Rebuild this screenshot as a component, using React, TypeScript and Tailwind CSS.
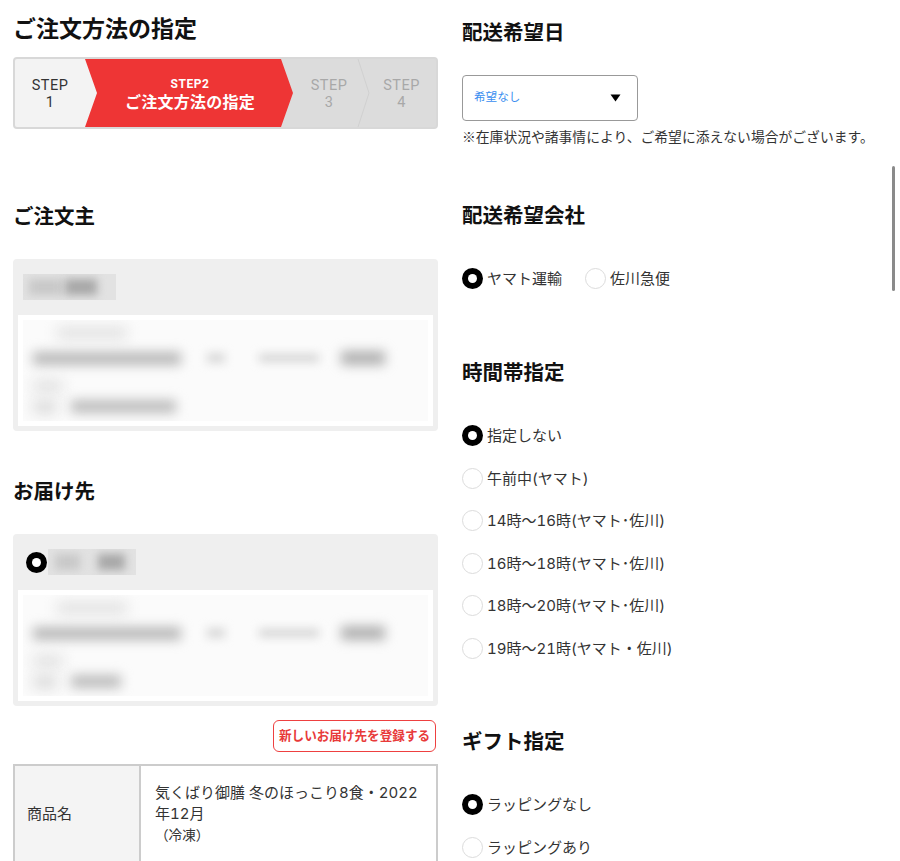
import React from "react";

const F = "font-['Inter','Noto_Sans_CJK_JP','Noto_Sans',sans-serif]";
const JP = "font-['Noto_Sans_CJK_JP',sans-serif]";

function Heading({ children, className = "" }: { children: React.ReactNode; className?: string }) {
  return <h2 className={`text-[20.5px] leading-[30px] font-bold text-[#111] ${className}`}>{children}</h2>;
}

function Radio({ on, label, className = "" }: { on?: boolean; label: string; className?: string }) {
  return (
    <div className={`flex items-center h-[21px] ${className}`}>
      {on ? (
        <span className="w-[21px] h-[21px] rounded-full bg-black flex items-center justify-center shrink-0">
          <span className="w-[9px] h-[9px] rounded-full bg-white" />
        </span>
      ) : (
        <span className="w-[21px] h-[21px] rounded-full border border-[#dcdcdc] bg-white shrink-0" />
      )}
      <span className="ml-[4px] text-[15px] leading-[21px] text-[#333] whitespace-nowrap tabular-nums">{label}</span>
    </div>
  );
}

function Step({ n, w }: { n: string; w: string }) {
  return (
    <div className={`${w} pt-[2px] flex flex-col items-center justify-center text-[14.5px] leading-[17px] tracking-[0.5px] text-[#a8a8a8] font-['Roboto',sans-serif]`}>
      <span>STEP</span>
      <span>{n}</span>
    </div>
  );
}

function BlurPanel({ radio, nameW, spotA, spotB, lastW }: { radio?: boolean; nameW: string; spotA: string; spotB: string; lastW: string }) {
  return (
    <div className="h-[172px] bg-[#efefef] rounded-[4px] px-[5px] pb-[5px] flex flex-col">
      <div className="h-[56px] flex items-center pl-[8px]">
        {radio && (
          <span className="w-[21px] h-[21px] rounded-full bg-black flex items-center justify-center shrink-0 mr-[1px]">
            <span className="w-[9px] h-[9px] rounded-full bg-white" />
          </span>
        )}
        <div className={`${nameW} h-[26px] bg-[#e2e2e2] flex items-center overflow-hidden ${radio ? "pl-[7px] gap-[18px]" : "pl-[6px] -ml-[3px] gap-[2px]"}`}>
          <div className={`h-[16px] ${spotA} bg-[#c8c8c8] blur-[4px]`} />
          <div className={`h-[16px] ${spotB} bg-[#a8a8a8] blur-[4px]`} />
        </div>
      </div>
      <div className="flex-1 bg-white p-[5px]">
        <div className="h-full bg-[#fbfbfb] px-[10px] pt-[8px] overflow-hidden">
          <div className="w-[70px] h-[10px] ml-[24px] bg-[#dcdcdc] blur-[7px]" />
          <div className="flex items-center mt-[12px] h-[16px]">
            <div className="w-[148px] h-[13px] bg-[#b8b8b8] blur-[6px]" />
            <div className="w-[18px] h-[10px] ml-[26px] bg-[#d8d8d8] blur-[5px]" />
            <div className="w-[60px] h-[8px] ml-[34px] bg-[#d4d4d4] blur-[5px]" />
            <div className="w-[44px] h-[14px] ml-[22px] bg-[#b0b0b0] blur-[6px]" />
          </div>
          <div className="w-[30px] h-[12px] mt-[14px] bg-[#e0e0e0] blur-[7px]" />
          <div className="flex items-center mt-[8px]">
            <div className="w-[24px] h-[12px] bg-[#d8d8d8] blur-[7px]" />
            <div className={`${lastW} h-[13px] ml-[14px] bg-[#bcbcbc] blur-[6px]`} />
          </div>
        </div>
      </div>
    </div>
  );
}

export default function App() {
  return (
    <div className={`relative w-[900px] h-[861px] overflow-hidden bg-white ${F}`}>
      <div className="flex items-start">
        {/* left column */}
        <div className="w-[425px] ml-[13px] shrink-0">
          <h1 className="text-[23px] leading-[34px] font-bold text-[#111] mt-[12px]">ご注文方法の指定</h1>

          <div className="relative mt-[11px] h-[72px] flex rounded-[4px] border-2 border-[#d8d8d8] bg-[#dcdcdc] overflow-hidden">
            <div className="w-[84px] shrink-0 bg-[#f3f3f3] pt-[2px] flex flex-col items-center justify-center text-[14.5px] leading-[17px] tracking-[0.5px] text-[#333] font-['Roboto',sans-serif] -mr-[14px] pr-[14px]">
              <span>STEP</span>
              <span>1</span>
            </div>
            <div className="w-[208px] shrink-0 bg-[#ee3535] pt-[3px] [clip-path:polygon(0_0,196px_0,100%_50%,196px_100%,0_100%,12px_50%)] flex flex-col items-center justify-center text-white font-bold">
              <span className="text-[12px] leading-[16px] tracking-[0.6px] font-['Roboto',sans-serif] pl-[2px]">STEP2</span>
              <span className="text-[16px] leading-[21px] tracking-[0.25px] pl-[2px]">ご注文方法の指定</span>
            </div>
            <Step n="3" w="w-[70px] pl-[2px]" />
            <div className="relative flex-1">
              <svg className="absolute left-[-6px] top-0" width="14" height="68" viewBox="0 0 14 68">
                <polyline points="1,0 12,34 1,68" fill="none" stroke="#d0d0d0" strokeWidth="1" />
              </svg>
              <Step n="4" w="h-full w-full pl-[4px]" />
            </div>
          </div>

          <Heading className="mt-[73px]">ご注文主</Heading>
          <div className="mt-[27px]">
            <BlurPanel nameW="w-[93px]" spotA="w-[34px]" spotB="w-[32px]" lastW="w-[105px]" />
          </div>

          <Heading className="mt-[46px]">お届け先</Heading>
          <div className="mt-[27px]">
            <BlurPanel radio nameW="w-[88px]" spotA="w-[25px]" spotB="w-[27px]" lastW="w-[50px]" />
          </div>

          <div className="flex justify-end mt-[14px] pr-[2px]">
            <button className="w-[163px] h-[32px] rounded-[6px] border border-[#ee4040] bg-white text-[12.6px] font-bold text-[#e83a3a] flex items-center justify-center whitespace-nowrap">
              新しいお届け先を登録する
            </button>
          </div>

          <div className="mt-[12px] flex h-[160px] border-2 border-b-0 border-[#cccccc] text-[#333]">
            <div className="w-[126px] shrink-0 bg-[#f4f4f4] border-r-2 border-[#cccccc] pl-[12px] h-[96px] flex items-center text-[15px]">
              商品名
            </div>
            <div className="flex-1 pl-[14px] pr-[10px] pt-[16px] text-[15px] leading-[21px] tabular-nums">
              気くばり御膳 冬のほっこり8食・2022年12月
              <div className="text-[13.6px] leading-[21px] mt-[1px]">（冷凍）</div>
            </div>
          </div>
        </div>

        {/* right column */}
        <div className="ml-[24px] w-[420px] shrink-0">
          <Heading className="mt-[18px]">配送希望日</Heading>
          <div className="mt-[27px] w-[176px] h-[46px] rounded-[4px] border border-[#999] bg-white flex items-center justify-between pl-[11px] pr-[16px]">
            <span className="text-[11.6px] text-[#3a8ef0]">希望なし</span>
            <svg width="11" height="8" viewBox="0 0 11 8"><path d="M0.5 0.5H10.5L5.5 7.5Z" fill="#000" /></svg>
          </div>
          <p className={`mt-[5px] text-[13.8px] leading-[20px] text-[#333] whitespace-nowrap ${JP}`}>※在庫状況や諸事情により、ご希望に添えない場合がございます。</p>

          <Heading className="mt-[55px]">配送希望会社</Heading>
          <div className="mt-[37px] flex">
            <Radio on label="ヤマト運輸" />
            <Radio label="佐川急便" className="ml-[23px]" />
          </div>

          <Heading className="mt-[69px]">時間帯指定</Heading>
          <div className="mt-[37px] flex flex-col gap-[21.6px]">
            <Radio on label="指定しない" />
            <Radio label="午前中(ヤマト)" />
            <Radio label="14時〜16時(ヤマト･佐川)" />
            <Radio label="16時〜18時(ヤマト･佐川)" />
            <Radio label="18時〜20時(ヤマト･佐川)" />
            <Radio label="19時〜21時(ヤマト・佐川)" />
          </div>

          <Heading className="mt-[68px]">ギフト指定</Heading>
          <div className="mt-[37px] flex flex-col gap-[21.6px]">
            <Radio on label="ラッピングなし" />
            <Radio label="ラッピングあり" />
          </div>
        </div>
      </div>

      <div className="absolute left-[892px] top-[166px] w-[3px] h-[125px] rounded-full bg-[#8a8a8a]" />
    </div>
  );
}
